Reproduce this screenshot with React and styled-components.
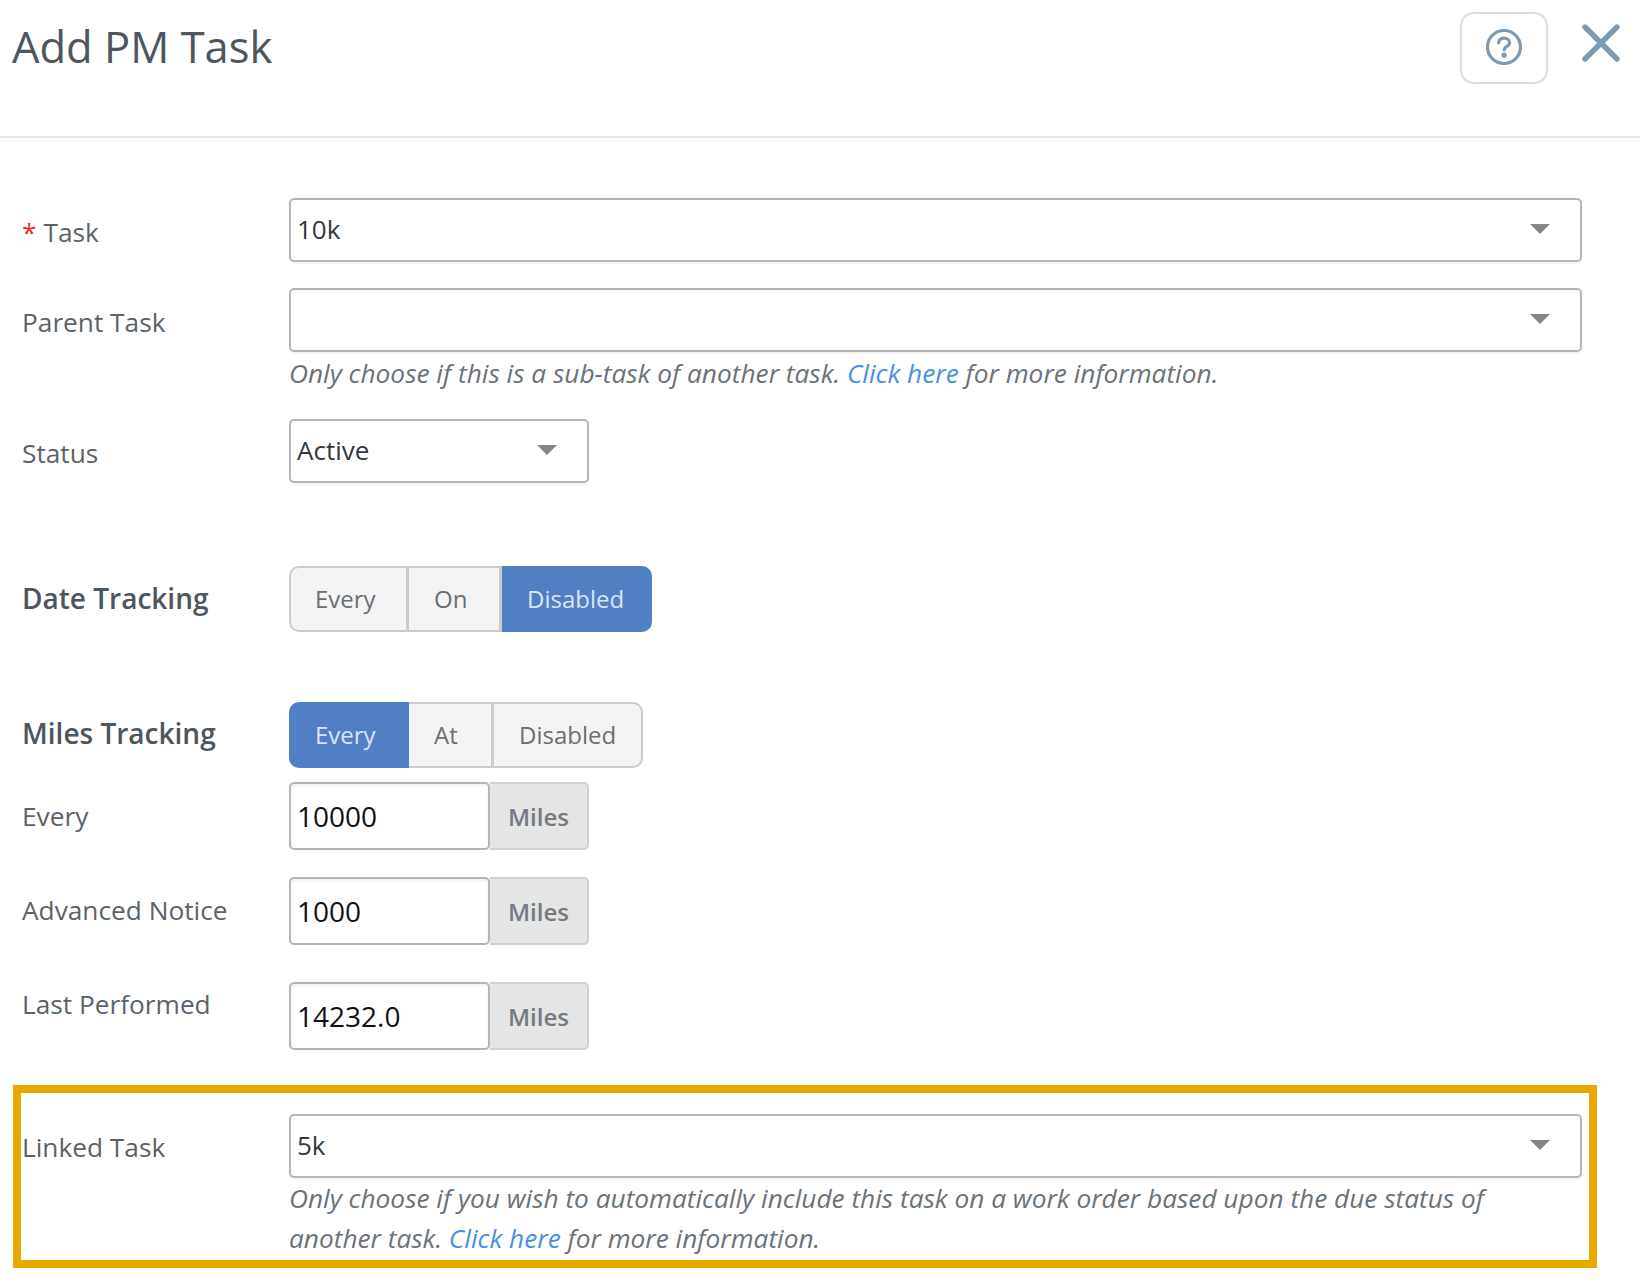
import React from 'react';
import styled, { createGlobalStyle } from 'styled-components';

const GlobalStyle = createGlobalStyle`
  html, body { margin: 0; padding: 0; background: #fff; }
  body { font-family: "Open Sans", "Noto Sans", sans-serif; }
  * { box-sizing: border-box; }
`;

const Page = styled.div`
  width: 1640px;
  height: 1286px;
  overflow: hidden;
  background: #fff;
`;

const Header = styled.header`
  height: 138px;
  border-bottom: 2px solid #e6e6e6;
  padding: 12px 20px 0 12px;
  display: flex;
  align-items: flex-start;
  justify-content: space-between;
`;

const Title = styled.h1`
  margin: 0;
  font-size: 43.5px;
  line-height: 70px;
  font-weight: 400;
  color: #4d565d;
`;

const HeaderActions = styled.div`
  display: flex;
  align-items: flex-start;
  gap: 34px;
`;

const HelpButton = styled.button`
  width: 88px;
  height: 72px;
  padding: 0 0 3px;
  background: #fff;
  border: 2px solid #d3deea;
  border-radius: 14px;
  display: flex;
  align-items: center;
  justify-content: center;
`;

const CloseButton = styled.button`
  width: 38px;
  height: 38px;
  margin-top: 12px;
  padding: 0;
  background: none;
  border: 0;
  display: flex;
`;

const Form = styled.main`
  padding: 60px 58px 0 0;
`;

const Row = styled.div`
  display: grid;
  grid-template-columns: 289px 1fr;
  margin-top: ${(p) => p.$top || 0}px;
`;

const Label = styled.label`
  padding: ${(p) => p.$pad || 0}px 0 0 22px;
  font-size: ${(p) => (p.$bold ? 28 : 26.25)}px;
  line-height: 36px;
  font-weight: ${(p) => (p.$bold ? 600 : 400)};
  color: ${(p) => (p.$bold ? '#4d565d' : '#5b6369')};
`;

const Star = styled.span`
  color: #f0281e;
  margin-right: 7px;
`;

const Select = styled.div`
  width: ${(p) => p.$width || '100%'};
  height: 64px;
  padding: 0 30px 2px 6px;
  display: flex;
  align-items: center;
  justify-content: space-between;
  background: #fff;
  border: 2px solid #b5b5b5;
  border-radius: 5px;
  box-shadow: 0 2px 2px rgba(0, 0, 0, 0.05);
  font-size: 26px;
  color: #33383c;
`;

const Caret = styled.span`
  width: 0;
  height: 0;
  border-left: 10px solid transparent;
  border-right: 10px solid transparent;
  border-top: 10px solid #858585;
`;

const Help = styled.p`
  margin: 1px 0 0;
  max-width: 1270px;
  font-size: 26.25px;
  line-height: 40px;
  font-style: italic;
  color: #6b7278;
`;

const HelpLink = styled.a`
  color: #4a8fe3;
`;

const Toggle = styled.div`
  display: inline-flex;
  height: 66px;
`;

const ToggleItem = styled.span`
  width: ${(p) => p.$width}px;
  height: 100%;
  padding: 0 0 2px ${(p) => (p.$first ? 24 : 25)}px;
  display: flex;
  align-items: center;
  font-size: 24px;
  background: ${(p) => (p.$active ? '#507fc3' : '#f4f4f4')};
  color: ${(p) => (p.$active ? '#dbe6f5' : '#686f75')};
  border: 2px solid ${(p) => (p.$active ? '#507fc3' : '#cccccc')};
  border-left-width: ${(p) => (p.$first ? 2 : 0)}px;
  border-right-width: ${(p) => (p.$last || p.$active ? 2 : 3)}px;
  border-radius: ${(p) => (p.$first ? '10px 0 0 10px' : p.$last ? '0 10px 10px 0' : '0')};
`;

const InputGroup = styled.div`
  display: flex;
  width: 300px;
  height: 68px;
`;

const Input = styled.div`
  width: 201px;
  padding: 0 6px 0 6px;
  display: flex;
  align-items: center;
  background: #fff;
  border: 2px solid #b5b5b5;
  border-radius: 5px;
  box-shadow: inset 0 2px 3px rgba(0, 0, 0, 0.06);
  font-size: 28px;
  color: #111;
`;

const Addon = styled.span`
  flex: 1;
  display: flex;
  align-items: center;
  justify-content: center;
  background: #e5e5e5;
  border: 2px solid #cfcfcf;
  border-left: 0;
  border-radius: 0 5px 5px 0;
  font-size: 24px;
  font-weight: 600;
  color: #747b81;
`;

const Highlight = styled.section`
  width: 1584px;
  height: 183px;
  margin: 35px 0 0 13px;
  padding: 21px 0 0 1px;
  border: 8px solid #e5a900;
`;

const HighlightRow = styled.div`
  display: grid;
  grid-template-columns: 267px 1293px;
`;

const HighlightLabel = styled.label`
  padding-top: 15px;
  font-size: 26.25px;
  line-height: 36px;
  color: #5b6369;
`;

const HighlightHelp = styled(Help)`
  margin-top: 0;
`;

const HelpIcon = () => (
  <svg width="38" height="38" viewBox="0 0 38 38" fill="none" stroke="#7d9ab3" strokeWidth="3.2" strokeLinecap="round">
    <circle cx="19" cy="19" r="16.5" />
    <path d="M13.6 14.8c.5-3 2.8-4.6 5.6-4.6 3 0 5.4 1.8 5.4 4.5 0 3.8-5.5 3.6-5.5 7.2" />
    <circle cx="19.1" cy="27.2" r="1.1" fill="#7d9ab3" />
  </svg>
);

const CloseIcon = () => (
  <svg width="38" height="38" viewBox="0 0 38 38" fill="none" stroke="#7d9ab3" strokeWidth="5.4" strokeLinecap="round">
    <path d="M3 3l32 32M35 3L3 35" />
  </svg>
);

const SelectBox = ({ value, width }) => (
  <Select $width={width}>
    <span>{value}</span>
    <Caret />
  </Select>
);

const ToggleGroup = ({ items, active }) => (
  <Toggle>
    {items.map((item, i) => (
      <ToggleItem
        key={item.label}
        $width={item.width}
        $active={item.label === active}
        $first={i === 0}
        $last={i === items.length - 1}
      >
        {item.label}
      </ToggleItem>
    ))}
  </Toggle>
);

const MilesInput = ({ value }) => (
  <InputGroup>
    <Input>{value}</Input>
    <Addon>Miles</Addon>
  </InputGroup>
);

const dateItems = [
  { label: 'Every', width: 120 },
  { label: 'On', width: 93 },
  { label: 'Disabled', width: 150 },
];

const milesItems = [
  { label: 'Every', width: 120 },
  { label: 'At', width: 85 },
  { label: 'Disabled', width: 149 },
];

const App = () => {
  return (
    <Page>
      <GlobalStyle />
      <Header>
        <Title>Add PM Task</Title>
        <HeaderActions>
          <HelpButton aria-label="Help"><HelpIcon /></HelpButton>
          <CloseButton aria-label="Close"><CloseIcon /></CloseButton>
        </HeaderActions>
      </Header>
      <Form>
        <Row>
          <Label $pad={16}><Star>*</Star>Task</Label>
          <SelectBox value="10k" />
        </Row>
        <Row $top={26}>
          <Label $pad={16}>Parent Task</Label>
          <div>
            <SelectBox value="" />
            <Help>
              Only choose if this is a sub-task of another task. <HelpLink>Click here</HelpLink> for more information.
            </Help>
          </div>
        </Row>
        <Row $top={26}>
          <Label $pad={16}>Status</Label>
          <SelectBox value="Active" width="300px" />
        </Row>
        <Row $top={83}>
          <Label $pad={14} $bold>Date Tracking</Label>
          <div><ToggleGroup items={dateItems} active="Disabled" /></div>
        </Row>
        <Row $top={70}>
          <Label $pad={13} $bold>Miles Tracking</Label>
          <div><ToggleGroup items={milesItems} active="Every" /></div>
        </Row>
        <Row $top={14}>
          <Label $pad={16}>Every</Label>
          <MilesInput value="10000" />
        </Row>
        <Row $top={27}>
          <Label $pad={15}>Advanced Notice</Label>
          <MilesInput value="1000" />
        </Row>
        <Row $top={37}>
          <Label $pad={4}>Last Performed</Label>
          <MilesInput value="14232.0" />
        </Row>
        <Highlight>
          <HighlightRow>
            <HighlightLabel>Linked Task</HighlightLabel>
            <div>
              <SelectBox value="5k" />
              <HighlightHelp>
                Only choose if you wish to automatically include this task on a work order based upon the due status of another task. <HelpLink>Click here</HelpLink> for more information.
              </HighlightHelp>
            </div>
          </HighlightRow>
        </Highlight>
      </Form>
    </Page>
  );
};

export default App;
